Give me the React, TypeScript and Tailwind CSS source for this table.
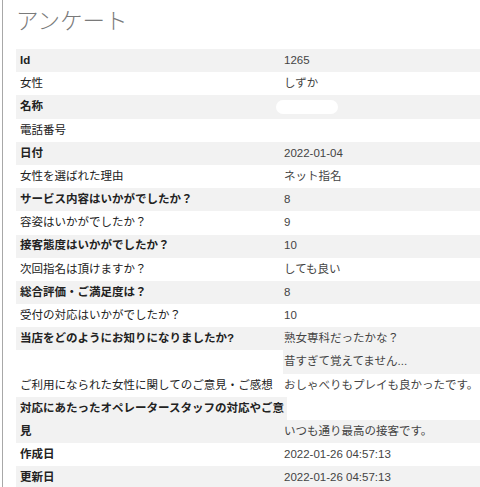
import React from "react";

type Row = {
  label: string;
  value?: React.ReactNode;
  bold: boolean;
  bg: "gray" | "white" | "valueOnly" | "labelOnly";
};

const rows: Row[] = [
  { label: "Id", value: "1265", bold: true, bg: "gray" },
  { label: "女性", value: "しずか", bold: false, bg: "white" },
  { label: "名称", value: "__pill__", bold: true, bg: "gray" },
  { label: "電話番号", value: "", bold: false, bg: "white" },
  { label: "日付", value: "2022-01-04", bold: true, bg: "gray" },
  { label: "女性を選ばれた理由", value: "ネット指名", bold: false, bg: "white" },
  { label: "サービス内容はいかがでしたか？", value: "8", bold: true, bg: "gray" },
  { label: "容姿はいかがでしたか？", value: "9", bold: false, bg: "white" },
  { label: "接客態度はいかがでしたか？", value: "10", bold: true, bg: "gray" },
  { label: "次回指名は頂けますか？", value: "しても良い", bold: false, bg: "white" },
  { label: "総合評価・ご満足度は？", value: "8", bold: true, bg: "gray" },
  { label: "受付の対応はいかがでしたか？", value: "10", bold: false, bg: "white" },
  { label: "当店をどのようにお知りになりましたか?", value: "熟女専科だったかな？", bold: true, bg: "gray" },
  { label: "", value: "昔すぎて覚えてません...", bold: false, bg: "valueOnly" },
  { label: "ご利用になられた女性に関してのご意見・ご感想", value: "おしゃべりもプレイも良かったです。", bold: false, bg: "white" },
  { label: "対応にあたったオペレータースタッフの対応やご意", value: "", bold: true, bg: "labelOnly" },
  { label: "見", value: "いつも通り最高の接客です。", bold: true, bg: "gray" },
  { label: "作成日", value: "2022-01-26 04:57:13", bold: true, bg: "white" },
  { label: "更新日", value: "2022-01-26 04:57:13", bold: true, bg: "gray" },
];

export default function App() {
  return (
    <div
      className="w-[480px] h-[487px] overflow-hidden bg-white"
      style={{ fontFamily: '"Liberation Sans", "Noto Sans CJK JP", sans-serif' }}
    >
      <div className="ml-[2px] h-full border-l border-[#a8a8a8] pl-[13px]">
        <div className="pt-[6px] h-[49px] text-[22.5px] leading-[32px] text-[#7a7a7a] font-light">
          アンケート
        </div>
        <div className="flex flex-col">
          {rows.map((r, i) => {
            const rowBg = r.bg === "gray" ? "bg-[#f2f2f2]" : "bg-white";
            const labelBg =
              r.bg === "labelOnly" ? "bg-[#f2f2f2] w-[271px]" : "w-[267px]";
            const valueBg = r.bg === "valueOnly" ? "bg-[#f2f2f2]" : "";
            return (
              <div
                key={i}
                className={`flex h-[23.2px] items-stretch text-[11.5px] ${rowBg}`}
              >
                <div
                  className={`${labelBg} shrink-0 whitespace-nowrap pl-[4px] flex items-center text-[#222] ${
                    r.bold ? "font-bold" : "font-normal"
                  }`}
                >
                  {r.label}
                </div>
                <div
                  className={`flex-1 flex items-center whitespace-nowrap ${
                    r.bg === "labelOnly" ? "" : "pl-[1px]"
                  } ${valueBg} text-[#444] ${r.bg === "labelOnly" ? "ml-[-4px]" : ""}`}
                >
                  {r.value === "__pill__" ? (
                    <span className="ml-[-8px] block w-[62px] h-[14px] rounded-full bg-white" />
                  ) : (
                    r.value
                  )}
                </div>
              </div>
            );
          })}
        </div>
      </div>
    </div>
  );
}
